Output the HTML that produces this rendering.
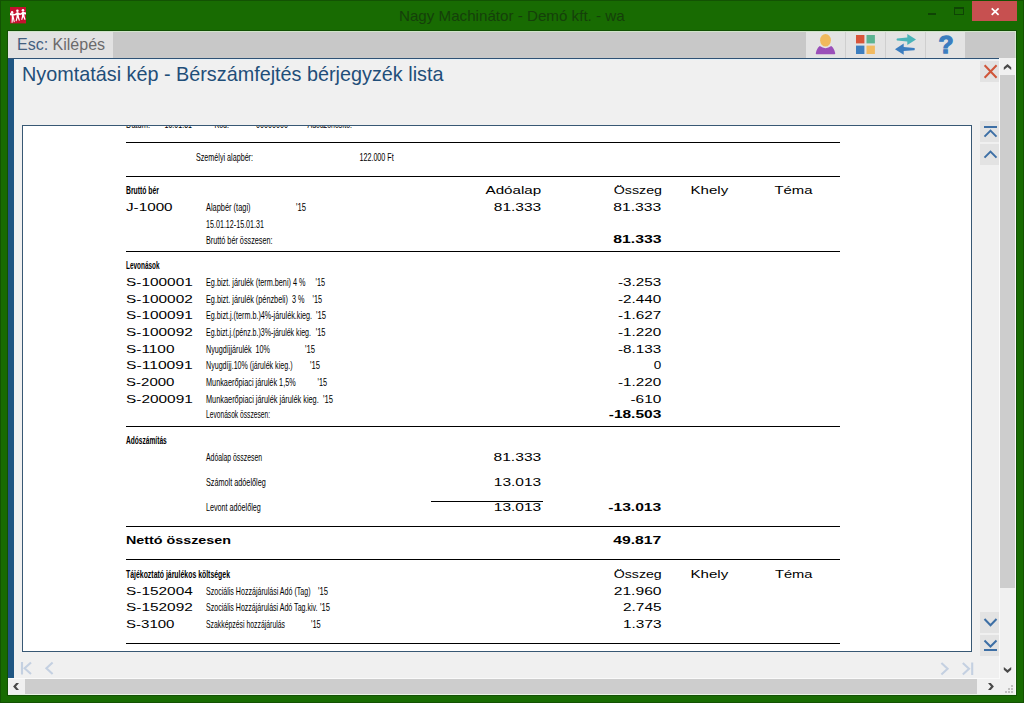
<!DOCTYPE html>
<html>
<head>
<meta charset="utf-8">
<title>Nagy Machinátor</title>
<style>
html,body{margin:0;padding:0;}
body{width:1024px;height:703px;overflow:hidden;position:relative;background:#186b02;font-family:"Liberation Sans",sans-serif;}
.abs{position:absolute;}
#frame{left:0;top:0;width:1022px;height:701px;border:1px solid #135203;}
#tline{left:7px;top:30px;width:1008px;height:664px;border:1px solid #125004;background:transparent;}
#wtitle{left:399px;top:4.5px;height:22px;line-height:22px;font-size:15px;color:#15400a;white-space:nowrap;transform-origin:0 50%;transform:scaleX(1.01);}
#closebtn{left:972px;top:1px;width:45px;height:20px;background:#c75050;}
#toolbar{left:8px;top:31px;width:1008px;height:27px;background:#c8c8c8;}
#escbtn{left:0;top:0;width:105px;height:27px;background:#e2e2e2;}
#esctxt{left:9px;top:5px;font-size:16px;line-height:18px;white-space:nowrap;color:#6b6b6b;}
#esctxt b{font-weight:normal;color:#44607f;}
.tbtn{top:0;width:39px;height:27px;background:#e3e3e3;border-right:1px solid #cfcfcf;}
#content{left:8px;top:58px;width:1008px;height:620px;background:#f0f0f0;}
#bluetop{left:8px;top:58px;width:991px;height:1px;background:#2f5275;}
#bluetop2{left:14px;top:59px;width:985px;height:1px;background:#e6f2fa;}
#bluestrip{left:8px;top:59px;width:6px;height:619px;background:#1f5582;}
#ptitle{left:22px;top:62px;font-size:20px;line-height:24px;color:#1f4e79;white-space:nowrap;transform-origin:0 19px;transform:scale(0.99,1.04);}
#paper{left:22px;top:125px;width:948px;height:525px;background:#fff;border:1px solid #385874;overflow:hidden;}
#vscroll{left:999px;top:58px;width:17px;height:620px;background:#f0f0f0;border-left:1px solid #fafafa;border-right:1px solid #fafafa;box-sizing:border-box;}
#vthumb{left:0;top:17px;width:15px;height:513px;background:#cdcdcd;}
#hscroll{left:8px;top:678px;width:1008px;height:17px;background:#f0f0f0;border-bottom:1px solid #e8f5e4;border-right:1px solid #fafafa;box-sizing:border-box;}
#hline{left:8px;top:678px;width:992px;height:1px;background:#fafafa;}
#hthumb{left:17px;top:1px;width:952px;height:15px;background:#cdcdcd;}
.nbtn{left:980px;width:19px;height:21px;background:#e3e3e3;}
svg{display:block;overflow:visible;}
</style>
</head>
<body>
<div id="frame" class="abs"></div>
<div id="tline" class="abs"></div>
<!-- app icon -->
<svg class="abs" style="left:10px;top:7px" width="16" height="17" viewBox="0 0 16 17">
  <rect width="16" height="16.4" fill="#c5112f"/>
  <g fill="#fff">
    <circle cx="2.1" cy="5.3" r="1.2"/><circle cx="7.4" cy="3.7" r="1.25"/><circle cx="13" cy="3.2" r="1.3"/>
    <polygon points="0,5.9 2,6.4 4.6,7 7.4,5.2 10.2,6.4 13,4.7 16,5.4 16,7.4 13,7 10.2,8 7.4,7.4 4.6,8.6 2,8.2 0,8.2"/>
    <polygon points="1.2,6.4 3.2,6.4 3.8,10 4.8,15 3.8,15.3 3,11.8 2.6,15.8 1.5,15.8 1.8,10"/>
    <polygon points="6.4,5.4 8.5,5.4 8.9,9.5 9.9,13.5 8.9,13.8 7.7,10.6 6.6,14.2 5.6,13.9 6.6,9.5"/>
    <polygon points="12,4.8 14.1,4.8 14.5,9 15.6,12.6 14.6,12.9 13.2,10 12.2,13 11.2,12.7 12,9"/>
  </g>
</svg>
<div id="wtitle" class="abs">Nagy Machinátor - Demó kft. - wa</div>
<!-- window buttons -->
<div class="abs" style="left:928px;top:13px;width:8px;height:2px;background:#0f4405"></div>
<div class="abs" style="left:954px;top:7px;width:8px;height:5px;border:1px solid #0f4405;border-top-width:2px"></div>
<div id="closebtn" class="abs"></div>
<svg class="abs" style="left:990px;top:7px" width="10" height="9" viewBox="0 0 10 9"><path d="M1.7 1.3 L8.6 7.9 M8.6 1.3 L1.7 7.9" stroke="#fff" stroke-width="1.7" fill="none"/></svg>

<div id="toolbar" class="abs">
  <div id="escbtn" class="abs"><div id="esctxt" class="abs"><b>Esc:</b> Kilépés</div></div>
  <div class="tbtn abs" style="left:798px"></div>
  <div class="tbtn abs" style="left:838px"></div>
  <div class="tbtn abs" style="left:878px"></div>
  <div class="tbtn abs" style="left:918px;border-right:none"></div>
</div>
<!-- toolbar icons (page coords) -->
<svg class="abs" style="left:806px;top:31px" width="160" height="27" viewBox="806 31 160 27">
  <!-- person -->
  <path d="M815.8 53.2 C816.6 50 817.6 47.6 819.8 46.1 Q825.5 50.2 831.2 46.1 C833.4 47.6 834.4 50 835.2 53.2 Q835.4 54.3 834.4 54.3 L816.6 54.3 Q815.6 54.3 815.8 53.2 Z" fill="#9a4fb9"/>
  <ellipse cx="825.5" cy="40.3" rx="5.4" ry="6.3" fill="#f0b95c"/>
  <!-- squares -->
  <rect x="856" y="35" width="8.4" height="8.4" fill="#d8553a"/>
  <rect x="866.5" y="35" width="8.4" height="8.4" fill="#5bb391"/>
  <rect x="856" y="45.6" width="8.4" height="8.4" fill="#3d7ebf"/>
  <rect x="866.5" y="45.6" width="8.4" height="8.4" fill="#f2ba60"/>
  <!-- arrows -->
  <path d="M897 38.4 L907.3 37.4 L907.3 34 L916 39.4 L907.3 44.9 L907.3 41.5 L897 40.5 Q896 39.45 897 38.4 Z" fill="#4ab4b8"/>
  <path d="M914.4 48 L903.7 47.1 L903.7 43.6 L895 49.2 L903.7 54.8 L903.7 51.1 L914.4 50.2 Q915.4 49.1 914.4 48 Z" fill="#3b7dbf"/>
  <!-- question -->
  <text x="938.6" y="52.9" font-size="24.4" font-weight="bold" fill="#3b7dbf" stroke="#3b7dbf" stroke-width="1.3" textLength="15" lengthAdjust="spacingAndGlyphs" font-family="Liberation Sans, sans-serif">?</text>
</svg>

<div class="abs" style="left:8px;top:31px;width:1008px;height:1px;background:#cfe4c9"></div>
<div class="abs" style="left:1015px;top:31px;width:1px;height:27px;background:#d4e8cf"></div>
<div id="content" class="abs"></div>
<div id="bluestrip" class="abs"></div>
<div id="bluetop" class="abs"></div>
<div id="bluetop2" class="abs"></div>
<div id="ptitle" class="abs">Nyomtatási kép - Bérszámfejtés bérjegyzék lista</div>

<!-- inner close -->
<div class="nbtn abs" style="top:61px"></div>
<svg class="abs" style="left:980px;top:61px" width="19" height="21" viewBox="980 61 19 21"><path d="M984.6 65.2 L996.6 77.8 M996.6 65.2 L984.6 77.8" stroke="#d0563a" stroke-width="2" fill="none"/></svg>

<div id="paper" class="abs">
<svg class="abs" style="left:0;top:0" width="948" height="525" viewBox="23 126 948 525" font-family="Liberation Sans, sans-serif" fill="#000">
<rect x="126" y="142" width="714" height="1"/>
<rect x="126" y="176" width="714" height="1"/>
<rect x="126" y="251" width="714" height="1"/>
<rect x="126" y="426" width="714" height="1"/>
<rect x="431" y="501" width="112" height="1"/>
<rect x="126" y="526" width="714" height="1"/>
<rect x="126" y="559" width="714" height="1"/>
<rect x="126" y="643" width="714" height="1"/>
<text x="126" y="127.6" font-size="11.6" textLength="24" lengthAdjust="spacingAndGlyphs" xml:space="preserve">Dátum:</text>
<text x="164.5" y="127.6" font-size="11.6" textLength="27.5" lengthAdjust="spacingAndGlyphs" xml:space="preserve">15.01.31</text>
<text x="214.5" y="127.6" font-size="11.6" textLength="14.5" lengthAdjust="spacingAndGlyphs" xml:space="preserve">Kód:</text>
<text x="256" y="127.6" font-size="11.6" textLength="32" lengthAdjust="spacingAndGlyphs" xml:space="preserve">00000000</text>
<text x="307.5" y="127.6" font-size="11.6" textLength="44.5" lengthAdjust="spacingAndGlyphs" xml:space="preserve">Adóazonosító:</text>
<text x="196" y="161" font-size="11.6" textLength="57" lengthAdjust="spacingAndGlyphs" xml:space="preserve">Személyi alapbér:</text>
<text x="359.4" y="161" font-size="11.6" textLength="34.35" lengthAdjust="spacingAndGlyphs" xml:space="preserve">122.000 Ft</text>
<text x="126" y="193.75" font-size="11.6" font-weight="bold" textLength="33" lengthAdjust="spacingAndGlyphs" xml:space="preserve">Bruttó bér</text>
<text x="485.5" y="193.75" font-size="10.8" textLength="55.75" lengthAdjust="spacingAndGlyphs" xml:space="preserve">Adóalap</text>
<text x="613.75" y="193.75" font-size="10.8" textLength="48.25" lengthAdjust="spacingAndGlyphs" xml:space="preserve">Összeg</text>
<text x="690.5" y="193.75" font-size="10.8" textLength="37.75" lengthAdjust="spacingAndGlyphs" xml:space="preserve">Khely</text>
<text x="774.5" y="193.75" font-size="10.8" textLength="38.0" lengthAdjust="spacingAndGlyphs" xml:space="preserve">Téma</text>
<text x="126" y="210.5" font-size="10.8" textLength="46.6" lengthAdjust="spacingAndGlyphs" xml:space="preserve">J-1000</text>
<text x="206" y="210.5" font-size="11.6" textLength="44.5" lengthAdjust="spacingAndGlyphs" xml:space="preserve">Alapbér (tagi)</text>
<text x="296" y="210.5" font-size="11.6" textLength="10" lengthAdjust="spacingAndGlyphs" xml:space="preserve">'15</text>
<text x="493.75" y="210.75" font-size="10.8" textLength="47.5" lengthAdjust="spacingAndGlyphs" xml:space="preserve">81.333</text>
<text x="613.25" y="210.75" font-size="10.8" textLength="48.0" lengthAdjust="spacingAndGlyphs" xml:space="preserve">81.333</text>
<text x="206" y="227.5" font-size="11.6" textLength="58" lengthAdjust="spacingAndGlyphs" xml:space="preserve">15.01.12-15.01.31</text>
<text x="206" y="243.75" font-size="11.6" textLength="66.5" lengthAdjust="spacingAndGlyphs" xml:space="preserve">Bruttó bér összesen:</text>
<text x="613.25" y="243.25" font-size="10.8" font-weight="bold" textLength="48.25" lengthAdjust="spacingAndGlyphs" xml:space="preserve">81.333</text>
<text x="126" y="268.75" font-size="11.6" font-weight="bold" textLength="33.5" lengthAdjust="spacingAndGlyphs" xml:space="preserve">Levonások</text>
<text x="126" y="285.75" font-size="10.8" textLength="66.75" lengthAdjust="spacingAndGlyphs" xml:space="preserve">S-100001</text>
<text x="206" y="285.75" font-size="11.6" textLength="99.5" lengthAdjust="spacingAndGlyphs" xml:space="preserve">Eg.bizt. járulék (term.beni) 4 %</text>
<text x="315.5" y="285.75" font-size="11.6" textLength="9.5" lengthAdjust="spacingAndGlyphs" xml:space="preserve">'15</text>
<text x="618" y="285.75" font-size="10.8" textLength="43.25" lengthAdjust="spacingAndGlyphs" xml:space="preserve">-3.253</text>
<text x="126" y="302.5" font-size="10.8" textLength="66.75" lengthAdjust="spacingAndGlyphs" xml:space="preserve">S-100002</text>
<text x="206" y="302.5" font-size="11.6" textLength="98.5" lengthAdjust="spacingAndGlyphs" xml:space="preserve">Eg.bizt. járulék (pénzbeli)  3 %</text>
<text x="312.5" y="302.5" font-size="11.6" textLength="9.5" lengthAdjust="spacingAndGlyphs" xml:space="preserve">'15</text>
<text x="618" y="302.5" font-size="10.8" textLength="43.25" lengthAdjust="spacingAndGlyphs" xml:space="preserve">-2.440</text>
<text x="126" y="319" font-size="10.8" textLength="66.75" lengthAdjust="spacingAndGlyphs" xml:space="preserve">S-100091</text>
<text x="206" y="319" font-size="11.6" textLength="106" lengthAdjust="spacingAndGlyphs" xml:space="preserve">Eg.bizt.j.(term.b.)4%-járulék.kieg.</text>
<text x="316" y="319" font-size="11.6" textLength="10" lengthAdjust="spacingAndGlyphs" xml:space="preserve">'15</text>
<text x="618" y="319" font-size="10.8" textLength="43.25" lengthAdjust="spacingAndGlyphs" xml:space="preserve">-1.627</text>
<text x="126" y="335.75" font-size="10.8" textLength="66.75" lengthAdjust="spacingAndGlyphs" xml:space="preserve">S-100092</text>
<text x="206" y="335.75" font-size="11.6" textLength="105" lengthAdjust="spacingAndGlyphs" xml:space="preserve">Eg.bizt.j.(pénz.b.)3%-járulék kieg.</text>
<text x="315.7" y="335.75" font-size="11.6" textLength="9.8" lengthAdjust="spacingAndGlyphs" xml:space="preserve">'15</text>
<text x="618" y="335.75" font-size="10.8" textLength="43.25" lengthAdjust="spacingAndGlyphs" xml:space="preserve">-1.220</text>
<text x="126" y="352.5" font-size="10.8" textLength="48.5" lengthAdjust="spacingAndGlyphs" xml:space="preserve">S-1100</text>
<text x="206" y="352.5" font-size="11.6" textLength="64" lengthAdjust="spacingAndGlyphs" xml:space="preserve">Nyugdíjjárulék  10%</text>
<text x="305" y="352.5" font-size="11.6" textLength="10" lengthAdjust="spacingAndGlyphs" xml:space="preserve">'15</text>
<text x="618" y="352.5" font-size="10.8" textLength="43.25" lengthAdjust="spacingAndGlyphs" xml:space="preserve">-8.133</text>
<text x="126" y="369.25" font-size="10.8" textLength="66.75" lengthAdjust="spacingAndGlyphs" xml:space="preserve">S-110091</text>
<text x="206" y="369.25" font-size="11.6" textLength="86.5" lengthAdjust="spacingAndGlyphs" xml:space="preserve">Nyugdíjj.10% (járulék kieg.)</text>
<text x="310" y="369.25" font-size="11.6" textLength="10" lengthAdjust="spacingAndGlyphs" xml:space="preserve">'15</text>
<text x="653.75" y="369.25" font-size="10.8" textLength="7.5" lengthAdjust="spacingAndGlyphs" xml:space="preserve">0</text>
<text x="126" y="385.75" font-size="10.8" textLength="48.5" lengthAdjust="spacingAndGlyphs" xml:space="preserve">S-2000</text>
<text x="206" y="385.75" font-size="11.6" textLength="89.75" lengthAdjust="spacingAndGlyphs" xml:space="preserve">Munkaerőpiaci járulék 1,5%</text>
<text x="317.5" y="385.75" font-size="11.6" textLength="9.5" lengthAdjust="spacingAndGlyphs" xml:space="preserve">'15</text>
<text x="618" y="385.75" font-size="10.8" textLength="43.25" lengthAdjust="spacingAndGlyphs" xml:space="preserve">-1.220</text>
<text x="126" y="402.5" font-size="10.8" textLength="66.75" lengthAdjust="spacingAndGlyphs" xml:space="preserve">S-200091</text>
<text x="206" y="402.5" font-size="11.6" textLength="112.75" lengthAdjust="spacingAndGlyphs" xml:space="preserve">Munkaerőpiaci járulék járulék kieg.</text>
<text x="323" y="402.5" font-size="11.6" textLength="10" lengthAdjust="spacingAndGlyphs" xml:space="preserve">'15</text>
<text x="630.5" y="402.5" font-size="10.8" textLength="30.75" lengthAdjust="spacingAndGlyphs" xml:space="preserve">-610</text>
<text x="206" y="418.25" font-size="11.6" textLength="64" lengthAdjust="spacingAndGlyphs" xml:space="preserve">Levonások összesen:</text>
<text x="608.75" y="418.25" font-size="10.8" font-weight="bold" textLength="52.5" lengthAdjust="spacingAndGlyphs" xml:space="preserve">-18.503</text>
<text x="126" y="443.75" font-size="11.6" font-weight="bold" textLength="40.75" lengthAdjust="spacingAndGlyphs" xml:space="preserve">Adószámítás</text>
<text x="206" y="460.5" font-size="11.6" textLength="56" lengthAdjust="spacingAndGlyphs" xml:space="preserve">Adóalap összesen</text>
<text x="493.5" y="460.5" font-size="10.8" textLength="47.75" lengthAdjust="spacingAndGlyphs" xml:space="preserve">81.333</text>
<text x="206" y="485.5" font-size="11.6" textLength="59.75" lengthAdjust="spacingAndGlyphs" xml:space="preserve">Számolt adóelőleg</text>
<text x="493.75" y="485.5" font-size="10.8" textLength="47.5" lengthAdjust="spacingAndGlyphs" xml:space="preserve">13.013</text>
<text x="206" y="510.5" font-size="11.6" textLength="54.75" lengthAdjust="spacingAndGlyphs" xml:space="preserve">Levont adóelőleg</text>
<text x="493.75" y="510.5" font-size="10.8" textLength="47.5" lengthAdjust="spacingAndGlyphs" xml:space="preserve">13.013</text>
<text x="608.25" y="510.5" font-size="10.8" font-weight="bold" textLength="53.0" lengthAdjust="spacingAndGlyphs" xml:space="preserve">-13.013</text>
<text x="126" y="543.75" font-size="10.8" font-weight="bold" textLength="105" lengthAdjust="spacingAndGlyphs" xml:space="preserve">Nettó összesen</text>
<text x="613.25" y="543.75" font-size="10.8" font-weight="bold" textLength="48.0" lengthAdjust="spacingAndGlyphs" xml:space="preserve">49.817</text>
<text x="126" y="577.5" font-size="11.6" font-weight="bold" textLength="104" lengthAdjust="spacingAndGlyphs" xml:space="preserve">Tájékoztató járulékos költségek</text>
<text x="613.75" y="578" font-size="10.8" textLength="48.0" lengthAdjust="spacingAndGlyphs" xml:space="preserve">Összeg</text>
<text x="690.5" y="578" font-size="10.8" textLength="37.75" lengthAdjust="spacingAndGlyphs" xml:space="preserve">Khely</text>
<text x="775" y="578" font-size="10.8" textLength="37.5" lengthAdjust="spacingAndGlyphs" xml:space="preserve">Téma</text>
<text x="126" y="594.5" font-size="10.8" textLength="66.75" lengthAdjust="spacingAndGlyphs" xml:space="preserve">S-152004</text>
<text x="206" y="594.5" font-size="11.6" textLength="104.5" lengthAdjust="spacingAndGlyphs" xml:space="preserve">Szociális Hozzájárulási Adó (Tag)</text>
<text x="318" y="594.5" font-size="11.6" textLength="10" lengthAdjust="spacingAndGlyphs" xml:space="preserve">'15</text>
<text x="613.75" y="594.5" font-size="10.8" textLength="47.75" lengthAdjust="spacingAndGlyphs" xml:space="preserve">21.960</text>
<text x="126" y="611" font-size="10.8" textLength="66.75" lengthAdjust="spacingAndGlyphs" xml:space="preserve">S-152092</text>
<text x="206" y="611" font-size="11.6" textLength="111.5" lengthAdjust="spacingAndGlyphs" xml:space="preserve">Szociális Hozzájárulási Adó Tag.kiv.</text>
<text x="320" y="611" font-size="11.6" textLength="10" lengthAdjust="spacingAndGlyphs" xml:space="preserve">'15</text>
<text x="623" y="611" font-size="10.8" textLength="38.5" lengthAdjust="spacingAndGlyphs" xml:space="preserve">2.745</text>
<text x="126" y="627.75" font-size="10.8" textLength="48.5" lengthAdjust="spacingAndGlyphs" xml:space="preserve">S-3100</text>
<text x="206" y="627.75" font-size="11.6" textLength="79" lengthAdjust="spacingAndGlyphs" xml:space="preserve">Szakképzési hozzájárulás</text>
<text x="311" y="627.75" font-size="11.6" textLength="9.75" lengthAdjust="spacingAndGlyphs" xml:space="preserve">'15</text>
<text x="623" y="627.75" font-size="10.8" textLength="38.5" lengthAdjust="spacingAndGlyphs" xml:space="preserve">1.373</text>
</svg>
</div>

<div class="nbtn abs" style="top:121px"></div>
<div class="nbtn abs" style="top:144px"></div>
<div class="nbtn abs" style="top:612px"></div>
<div class="nbtn abs" style="top:635px"></div>
<svg class="abs" style="left:980px;top:100px" width="19" height="570" viewBox="980 100 19 570" fill="none" stroke="#3d6fa5" stroke-width="2">
  <path d="M984 127 H997"/>
  <path d="M984.5 136.6 L990.5 130.6 L996.5 136.6"/>
  <path d="M984.5 157.6 L990.5 151.6 L996.5 157.6"/>
  <path d="M984.5 619 L990.5 625.2 L996.5 619"/>
  <path d="M984.5 640.5 L990.5 646.5 L996.5 640.5"/>
  <path d="M984 650 H997"/>
</svg>
<!-- page nav faded -->
<svg class="abs" style="left:14px;top:658px" width="985" height="20" viewBox="14 658 985 20" fill="none" stroke="#c4d0e1" stroke-width="2.1">
  <path d="M22 662 V674.5"/>
  <path d="M31 662.5 L24.6 668.3 L31 674"/>
  <path d="M52.6 662.5 L46.4 668.3 L52.6 674"/>
  <path d="M941.4 663 L947.6 668.7 L941.4 674.4"/>
  <path d="M962.8 663 L969 668.7 L962.8 674.4"/>
  <path d="M972.2 662.5 V675"/>
</svg>

<div id="vscroll" class="abs"><div id="vthumb" class="abs"></div></div>
<div id="hscroll" class="abs"><div id="hthumb" class="abs"></div></div>
<div id="hline" class="abs"></div>
<svg class="abs" style="left:0;top:0" width="1024" height="703" viewBox="0 0 1024 703" fill="none" stroke="#4a4a4a" stroke-width="2">
  <g fill="#484848" stroke="none">
  <polygon points="1003.8,70 1003.8,67.2 1007.5,64 1011.2,67.2 1011.2,70 1007.5,66.9"/>
  <polygon points="1003.8,667 1003.8,669.8 1007.5,673 1011.2,669.8 1011.2,667 1007.5,670.1"/>
  <polygon points="19,682.9 16.2,682.9 13.1,686.4 16.2,689.9 19,689.9 16,686.4"/>
  <polygon points="988,682.9 990.8,682.9 993.9,686.4 990.8,689.9 988,689.9 991,686.4"/>
  </g>
  <g fill="#c0c0c0" stroke="none">
    <rect x="1011" y="685" width="2" height="2"/>
    <rect x="1008" y="688" width="2" height="2"/><rect x="1011" y="688" width="2" height="2"/>
    <rect x="1005" y="691" width="2" height="2"/><rect x="1008" y="691" width="2" height="2"/><rect x="1011" y="691" width="2" height="2"/>
  </g>
</svg>
</body>
</html>
